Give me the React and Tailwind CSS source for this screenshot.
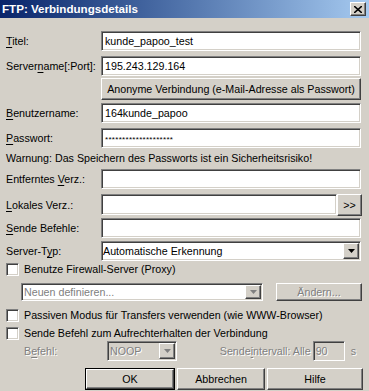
import React from "react";

const F = "font-['Liberation_Sans',Arial,sans-serif]";

const sunken =
  "border border-t-[#808080] border-l-[#808080] border-b-white border-r-white shadow-[inset_1px_1px_0_#404040,inset_-1px_-1px_0_#d4d0c8]";
const raised =
  "bg-[#d4d0c8] border border-t-white border-l-white border-b-[#404040] border-r-[#404040] shadow-[inset_-1px_-1px_0_#808080]";

function Arrow({ disabled }) {
  return (
    <svg width="7" height="4" viewBox="0 0 7 4">
      <polygon points="0,0 7,0 3.5,4" fill={disabled ? "#808080" : "#000"} />
    </svg>
  );
}

function Label({ pre, u, post, disabled }) {
  return (
    <span className={disabled ? "text-[#808080] [text-shadow:1px_1px_0_#fff]" : "text-black"}>
      {pre}
      <span className="underline underline-offset-[2px]">{u}</span>
      {post}
    </span>
  );
}

function Row({ children, label, className = "" }) {
  return (
    <div className={`flex items-center ${className}`}>
      <div className="w-[95px] shrink-0">{label}</div>
      {children}
    </div>
  );
}

function Input({ value, className = "h-[20px] w-[260px]" }) {
  return (
    <div className={`bg-white ${sunken} flex items-center pl-[3px] ${className}`}>
      <span className="leading-none">{value}</span>
    </div>
  );
}

function Check({ label }) {
  return (
    <div className="flex items-center h-[16px]">
      <div className={`w-[13px] h-[13px] bg-white ${sunken}`} />
      <span className="ml-[5px]">{label}</span>
    </div>
  );
}

export default function App() {
  return (
    <div className={`w-[369px] h-[391px] bg-[#d4d0c8] ${F} text-[10.7px] text-black overflow-hidden`}>
      <div className="h-[18px] bg-gradient-to-r from-[#0a246a] to-[#a6caf0] flex items-center justify-between pl-[2px] pr-[3px]">
        <span className="text-white font-bold text-[11.6px] leading-none">FTP: Verbindungsdetails</span>
        <div className={`w-[16px] h-[14px] ${raised} flex items-center justify-center`}>
          <svg width="8" height="7" viewBox="0 0 8 7">
            <path d="M0 0 L8 7 M8 0 L0 7" stroke="#000" strokeWidth="1.6" />
          </svg>
        </div>
      </div>

      <div className="pl-[6px] flex flex-col">
        <Row className="mt-[13px] h-[20px]" label={<Label u="T" post="itel:" />}>
          <Input value="kunde_papoo_test" />
        </Row>
        <Row className="mt-[5px] h-[20px]" label={<Label pre="Server" u="n" post="ame[:Port]:" />}>
          <Input value="195.243.129.164" />
        </Row>
        <div className="mt-[2px] ml-[95px] w-[260px] h-[22px]">
          <div className={`w-full h-full ${raised} flex items-center justify-center`}>
            Anonyme Verbindung (e-Mail-Adresse als Passwort)
          </div>
        </div>
        <Row className="mt-[3px] h-[20px]" label={<Label u="B" post="enutzername:" />}>
          <Input value="164kunde_papoo" />
        </Row>
        <Row className="mt-[5px] h-[20px]" label={<Label u="P" post="asswort:" />}>
          <Input value={<span className="text-[8px] tracking-[0.3px]">{"********************"}</span>} />
        </Row>
        <div className="h-[21px] flex items-center">Warnung: Das Speichern des Passworts ist ein Sicherheitsrisiko!</div>
        <Row className="h-[20px]" label={<Label pre="Entferntes " u="V" post="erz.:" />}>
          <Input value="" />
        </Row>
        <Row className="mt-[5px] h-[22px]" label={<Label u="L" post="okales Verz.:" />}>
          <div className="flex items-start h-[22px]">
            <Input value="" className="h-[21px] w-[236px]" />
            <div className={`w-[25px] h-[22px] ${raised} flex items-center justify-center`}>&gt;&gt;</div>
          </div>
        </Row>
        <Row className="mt-[2px] h-[20px]" label={<Label u="S" post="ende Befehle:" />}>
          <Input value="" />
        </Row>
        <Row className="mt-[3px] h-[20px]" label={<Label pre="Server-T" u="y" post="p:" />}>
          <div className={`w-[260px] h-[20px] bg-white ${sunken} flex items-center justify-between pl-[1px] pr-[1px]`}>
            <span>Automatische Erkennung</span>
            <div className={`w-[16px] h-[16px] ${raised} flex items-center justify-center`}>
              <Arrow />
            </div>
          </div>
        </Row>
        <div className="h-[16px] flex items-center">
          <Check label="Benutze Firewall-Server (Proxy)" />
        </div>
        <div className="mt-[6px] h-[18px] flex items-center">
          <div className={`ml-[15px] w-[242px] h-[18px] bg-white ${sunken} flex items-center justify-between pl-[2px] pr-[1px]`}>
            <span className="text-[#808080]">Neuen definieren...</span>
            <div className={`w-[16px] h-[14px] ${raised} flex items-center justify-center`}>
              <Arrow disabled />
            </div>
          </div>
          <div className={`ml-[13px] w-[86px] h-[18px] ${raised} flex items-center justify-center text-[#808080] [text-shadow:1px_1px_0_#fff]`}>
            Ändern...
          </div>
        </div>
        <div className="mt-[6px] h-[17px] flex items-center">
          <Check label="Passiven Modus für Transfers verwenden (wie WWW-Browser)" />
        </div>
        <div className="mt-[1px] h-[16px] flex items-center">
          <Check label="Sende Befehl zum Aufrechterhalten der Verbindung" />
        </div>
        <div className="h-[20px] flex items-center">
          <div className="ml-[18px] w-[83px]">
            <Label pre="B" u="e" post="fehl:" disabled />
          </div>
          <div className={`w-[70px] h-[20px] bg-[#d4d0c8] ${sunken} flex items-center justify-between pl-[2px] pr-[1px]`}>
            <span className="text-[#808080] [text-shadow:1px_1px_0_#fff]">NOOP</span>
            <div className={`w-[16px] h-[16px] ${raised} flex items-center justify-center`}>
              <Arrow disabled />
            </div>
          </div>
          <div className="ml-auto flex items-center pr-[13px]">
            <Label pre="Sende" u="i" post="ntervall: Alle" disabled />
            <div className={`ml-[2px] w-[32px] h-[20px] bg-[#d4d0c8] ${sunken} flex items-center pl-[2px]`}>
              <span className="text-[#808080] [text-shadow:1px_1px_0_#fff]">90</span>
            </div>
            <span className="ml-[6px] text-[#808080] [text-shadow:1px_1px_0_#fff]">s</span>
          </div>
        </div>
        <div className="mt-[7px] h-[22px] flex">
          <div className="ml-[79px] w-[90px] h-[22px] border border-black">
            <div className={`w-full h-full ${raised} flex items-center justify-center`}>OK</div>
          </div>
          <div className={`ml-[2px] w-[88px] h-[22px] ${raised} flex items-center justify-center`}>Abbrechen</div>
          <div className={`ml-[2px] w-[96px] h-[22px] ${raised} flex items-center justify-center`}>Hilfe</div>
        </div>
      </div>
    </div>
  );
}
